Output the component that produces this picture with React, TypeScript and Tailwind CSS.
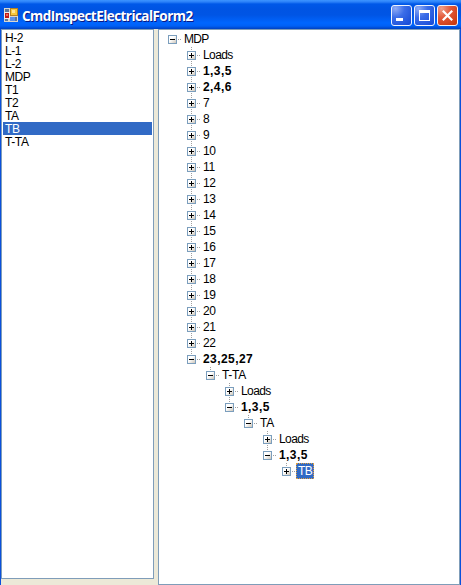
import React from 'react';

type Node = { label: string; level: number; open?: boolean; bold?: boolean; last?: boolean; selected?: boolean };

const listItems = ['H-2', 'L-1', 'L-2', 'MDP', 'T1', 'T2', 'TA', 'TB', 'T-TA'];

const nodes: Node[] = [
  { label: 'MDP', level: 0, open: true, last: true },
  { label: 'Loads', level: 1 },
  { label: '1,3,5', level: 1, bold: true },
  { label: '2,4,6', level: 1, bold: true },
  ...Array.from({ length: 16 }, (_, i) => ({ label: String(i + 7), level: 1 })),
  { label: '23,25,27', level: 1, open: true, bold: true, last: true },
  { label: 'T-TA', level: 2, open: true, last: true },
  { label: 'Loads', level: 3 },
  { label: '1,3,5', level: 3, open: true, bold: true, last: true },
  { label: 'TA', level: 4, open: true, last: true },
  { label: 'Loads', level: 5 },
  { label: '1,3,5', level: 5, open: true, bold: true, last: true },
  { label: 'TB', level: 6, last: true, selected: true },
];

function Expander({ node }: { node: Node }) {
  return (
    <svg width="16" height="16" viewBox="0 0 16 16" shapeRendering="crispEdges" className="shrink-0">
      <defs>
        <linearGradient id="box" x1="0" y1="0" x2="1" y2="1">
          <stop offset="0.4" stopColor="#fff" />
          <stop offset="1" stopColor="#cdc5b8" />
        </linearGradient>
      </defs>
      {node.level > 0 && <path d="M4 0h1v1h-1zM4 2h1v1h-1z" fill="#a0a0a0" />}
      {!node.last && <path d="M4 14h1v1h-1z" fill="#a0a0a0" />}
      <path d="M10 8h1v1h-1zM12 8h1v1h-1z" fill="#a0a0a0" />
      <rect x="0" y="4" width="9" height="9" fill="#7b9ebd" />
      <rect x="1" y="5" width="7" height="7" fill="url(#box)" />
      <path d={node.open ? 'M2 8h5v1h-5z' : 'M2 8h5v1h-5zM4 6h1v5h-1z'} fill="#000" />
    </svg>
  );
}

function TreeRow({ node }: { node: Node }) {
  const text = node.bold
    ? 'text-[12px] font-bold tracking-[0.43px]'
    : node.label === 'Loads'
      ? 'text-[12px] tracking-[-0.6px]'
      : node.level === 0 || node.selected
        ? 'text-[12px] tracking-[-0.7px]'
        : 'text-[12px] tracking-[-0.3px]';
  return (
    <div className="flex h-4 items-center" style={{ paddingLeft: node.level * 19 }}>
      <Expander node={node} />
      <span
        className={`h-4 whitespace-nowrap leading-4 ${text} ${
          node.selected
            ? '-ml-0.5 w-[18px] border border-dotted border-[#e0a040] bg-[#316ac5] pl-px leading-[14px]! text-white'
            : ''
        }`}
      >
        {node.label}
      </span>
    </div>
  );
}

function CaptionButton({ kind }: { kind: 'min' | 'max' | 'close' }) {
  return (
    <svg width="21" height="21" viewBox="0 0 21 21" className="shrink-0">
      <defs>
        <radialGradient id="blueButton" cx="0.2" cy="0.15" r="1">
          <stop offset="0" stopColor="#8fabf5" />
          <stop offset="0.45" stopColor="#3b6de8" />
          <stop offset="1" stopColor="#1b4fd8" />
        </radialGradient>
        <radialGradient id="redButton" cx="0.2" cy="0.15" r="1">
          <stop offset="0" stopColor="#f0a08a" />
          <stop offset="0.45" stopColor="#e3593a" />
          <stop offset="1" stopColor="#cc3a10" />
        </radialGradient>
      </defs>
      <rect x="0.5" y="0.5" width="20" height="20" rx="2.5" fill={kind === 'close' ? 'url(#redButton)' : 'url(#blueButton)'} stroke="#eef3fd" />
      {kind === 'min' && <rect x="5" y="13" width="7" height="3" fill="#fff" />}
      {kind === 'max' && <path fillRule="evenodd" fill="#fff" d="M5 5h11v11h-11zM6 8h9v7h-9z" />}
      {kind === 'close' && <path d="M5.8 5.8l9.4 9.4M15.2 5.8l-9.4 9.4" stroke="#fff" strokeWidth="2.2" />}
    </svg>
  );
}

function FormIcon() {
  return (
    <svg width="15" height="14" viewBox="0 0 15 14" shapeRendering="crispEdges" className="shrink-0">
      <rect width="14" height="14" fill="#d9d6cf" />
      <path d="M1 1h4v3h-4zM1 11h3v2h-3zM11 9h2v4h-2z" fill="#5e7699" />
      <rect x="0" y="4" width="6" height="7" fill="#eee" />
      <rect x="1" y="5" width="4" height="5" fill="#c01818" />
      <rect x="2" y="6" width="2" height="2" fill="#e66a58" />
      <rect x="6" y="0" width="8" height="8" fill="#b58020" />
      <rect x="7" y="1" width="6" height="6" fill="#f8c83c" />
      <rect x="8" y="2" width="3" height="3" fill="#ffe595" />
      <rect x="6" y="9" width="5" height="4" fill="#5d91e8" />
    </svg>
  );
}

export default function App() {
  return (
    <div className="flex h-[585px] w-[461px] flex-col overflow-hidden bg-[#0a50dc] font-['Liberation_Sans',Arial,sans-serif] text-black">
      <header className="flex h-[29px] shrink-0 items-start bg-[linear-gradient(180deg,#3d95ff_0px,#2a80f8_2px,#0058e8_4px,#0054e3_9px,#0055e5_15px,#0066ff_23px,#0060f5_26px,#0040c0_29px)] pr-[3px] pl-1">
        <div className="mt-2">
          <FormIcon />
        </div>
        <h1 className="mt-[6px] ml-[3px] grow text-[13.5px] leading-5 font-bold whitespace-nowrap text-white [font-family:'Open_Sans',sans-serif] tracking-[-0.56px] [text-shadow:1px_1px_0_#0a1883]">
          CmdInspectElectricalForm2
        </h1>
        <div className="mt-[5px] flex gap-[2px]">
          <CaptionButton kind="min" />
          <CaptionButton kind="max" />
          <CaptionButton kind="close" />
        </div>
      </header>
      <main className="mx-px flex min-h-0 grow bg-[#ece9d8]">
        <ul className="h-[550px] w-[153px] shrink-0 border border-[#7f9db9] bg-white px-px pt-px">
          {listItems.map((item) => (
            <li
              key={item}
              className={`h-[13px] pl-[2px] text-[12px] leading-[15px] tracking-[-0.4px] ${item === 'TB' ? 'bg-[#316ac5] text-white' : ''}`}
            >
              {item}
            </li>
          ))}
        </ul>
        <div className="ml-1 grow border border-[#7f9db9] bg-white pt-px pl-[9px]">
          {nodes.map((node, i) => (
            <TreeRow key={i} node={node} />
          ))}
        </div>
      </main>
    </div>
  );
}
